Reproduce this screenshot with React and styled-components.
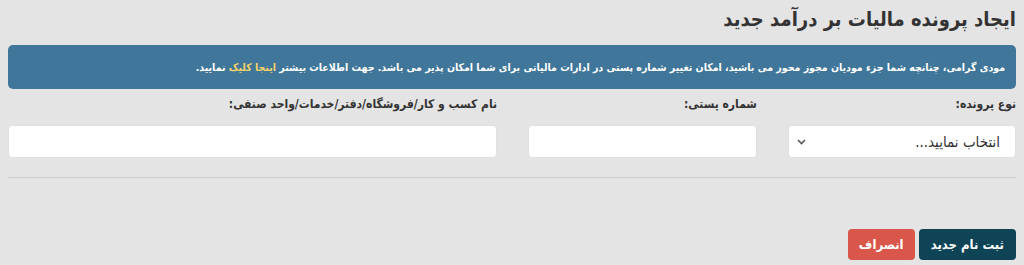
import React from 'react';
import styled, { createGlobalStyle } from 'styled-components';

const GlobalStyle = createGlobalStyle`
  html, body {
    margin: 0;
    padding: 0;
    background: #e4e4e4;
  }
  body {
    font-family: "DejaVu Sans Condensed", "DejaVu Sans", sans-serif;
    color: #333;
  }
`;

const Page = styled.div`
  direction: rtl;
  padding: 0 8px 0 8px;
  height: 265px;
  box-sizing: border-box;
  display: flex;
  flex-direction: column;
`;

const Title = styled.h1`
  margin: 3px 0 0 0;
  font-size: 20px;
  font-weight: bold;
  color: #333;
  line-height: 32px;
`;

const Alert = styled.div`
  margin-top: 10px;
  background: #3f7699;
  border-radius: 5px;
  color: #fff;
  font-size: 10.5px;
  font-weight: bold;
  padding: 0 11px;
  height: 44px;
  display: flex;
  align-items: center;
`;

const Link = styled.a`
  color: #f3d36b;
  text-decoration: none;
`;

const FieldRow = styled.div`
  display: grid;
  grid-template-columns: 228px 229px 1fr;
  column-gap: 31px;
  margin-top: 7px;
`;

const Field = styled.div`
  display: flex;
  flex-direction: column;
`;

const Label = styled.label`
  font-size: 12px;
  font-weight: bold;
  color: #333;
  line-height: 16px;
  height: 16px;
  margin-bottom: 13px;
`;

const Input = styled.input`
  box-sizing: border-box;
  height: 33px;
  border: 1px solid #e0e0e0;
  border-radius: 4px;
  background: #fff;
  outline: none;
  font-family: inherit;
  direction: rtl;
`;

const SelectBox = styled.div`
  box-sizing: border-box;
  height: 33px;
  border: 1px solid #e0e0e0;
  border-radius: 4px;
  background: #fff;
  display: flex;
  align-items: center;
  justify-content: space-between;
  padding: 0 15px 0 8px;
  font-size: 15px;
  color: #333;
`;

const Divider = styled.hr`
  border: none;
  border-top: 1px solid #cbcbcb;
  margin: 19px 0 0 0;
`;

const Actions = styled.div`
  margin-top: auto;
  margin-bottom: 5px;
  display: flex;
  gap: 4px;
`;

const Button = styled.button`
  border: none;
  border-radius: 4px;
  height: 31px;
  padding: 0 ${p => (p.$wide ? '12px' : '11px')};
  font-family: inherit;
  font-size: 13px;
  font-weight: bold;
  color: #fff;
  background: ${p => (p.$variant === 'danger' ? '#d9574a' : '#0e4456')};
  cursor: pointer;
`;

const Chevron = () => (
  <svg width="9" height="6" viewBox="0 0 9 6">
    <path d="M1 1l3.5 3.5L8 1" fill="none" stroke="#555" strokeWidth="1.6" />
  </svg>
);

export default function App() {
  return (
    <>
      <GlobalStyle />
      <Page>
        <Title>ایجاد پرونده مالیات بر درآمد جدید</Title>
        <Alert>
          <span>
            مودی گرامی، چنانچه شما جزء مودیان مجوز محور می باشید، امکان تغییر شماره پستی در ادارات مالیاتی برای شما امکان پذیر می باشد. جهت اطلاعات بیشتر{' '}
            <Link href="#">اینجا کلیک</Link> نمایید.
          </span>
        </Alert>
        <FieldRow>
          <Field>
            <Label>نوع پرونده:</Label>
            <SelectBox>
              <span>انتخاب نمایید...</span>
              <Chevron />
            </SelectBox>
          </Field>
          <Field>
            <Label>شماره پستی:</Label>
            <Input type="text" />
          </Field>
          <Field>
            <Label>نام کسب و کار/فروشگاه/دفتر/خدمات/واحد صنفی:</Label>
            <Input type="text" />
          </Field>
        </FieldRow>
        <Divider />
        <Actions>
          <Button $wide>ثبت نام جدید</Button>
          <Button $variant="danger">انصراف</Button>
        </Actions>
      </Page>
    </>
  );
}
